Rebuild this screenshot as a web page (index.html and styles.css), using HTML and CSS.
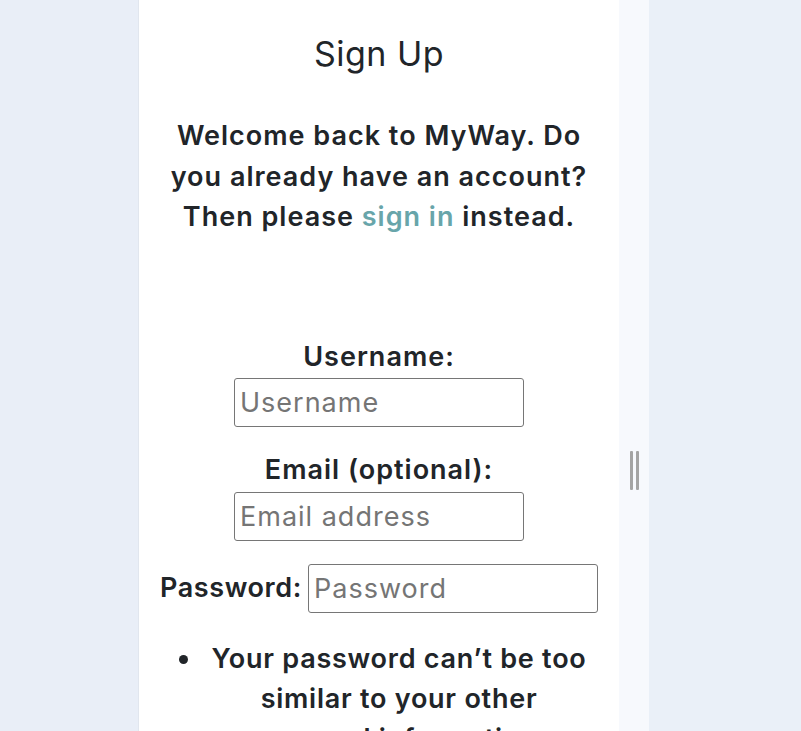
FILE: index.html
```html
<!DOCTYPE html>
<html lang="en">
<head>
<meta charset="utf-8">
<title>Sign Up</title>
<link rel="stylesheet" href="styles.css">
</head>
<body>
<div class="page">
  <aside class="gutter"></aside>
  <main class="panel">
    <h1 class="title">Sign Up</h1>
    <p class="intro">Welcome back to MyWay. Do you already have an account? Then please <a class="link" href="#">sign in</a> instead.</p>
    <form class="form">
      <div class="field">
        <label class="label" for="username">Username:</label>
        <input class="input" id="username" type="text" placeholder="Username">
      </div>
      <div class="field">
        <label class="label" for="email">Email (optional):</label>
        <input class="input" id="email" type="email" placeholder="Email address">
      </div>
      <div class="field field-inline">
        <label class="label label-inline" for="password">Password:</label>
        <input class="input" id="password" type="password" placeholder="Password">
      </div>
      <ul class="rules">
        <li>Your password can’t be too similar to your other personal information.</li>
        <li>Your password must contain at least 8 characters.</li>
      </ul>
    </form>
  </main>
  <div class="splitter"><span class="grip"></span><span class="grip"></span></div>
  <div class="rest"></div>
</div>
</body>
</html>
```
FILE: styles.css
```css
html, body {
  margin: 0;
  padding: 0;
  height: 100%;
  overflow: hidden;
}
body {
  background: #eaeff7;
  font-family: Inter, "Noto Sans", sans-serif;
  color: #212529;
}
.page {
  display: flex;
  height: 100%;
}
.gutter {
  width: 138px;
  flex: none;
  background: #e9eef7;
  border-right: 1px solid #e1e6ee;
}
.panel {
  width: 432px;
  flex: none;
  background: #ffffff;
  padding: 0 24px;
  text-align: center;
}
.title {
  margin: 28px 0 0;
  font-size: 34px;
  font-weight: 400;
  line-height: 51px;
  letter-spacing: 0.5px;
}
.intro {
  margin: 37px 0 0;
  font-size: 27px;
  font-weight: 600;
  line-height: 40.5px;
  letter-spacing: 1px;
}
.link {
  color: #68a5aa;
  text-decoration: none;
}
.form {
  margin-top: 99px;
  display: flex;
  flex-direction: column;
  align-items: center;
}
.field {
  display: flex;
  flex-direction: column;
  align-items: center;
  gap: 1px;
  margin-bottom: 23px;
}
.field-inline {
  flex-direction: row;
  gap: 6px;
  margin-bottom: 24px;
}
.label {
  font-size: 27px;
  font-weight: 600;
  line-height: 40.5px;
  letter-spacing: 1px;
}
.label-inline {
  letter-spacing: 0.6px;
}
.input {
  box-sizing: border-box;
  width: 290px;
  height: 49px;
  margin: 0;
  padding: 0 5px;
  border: 1px solid #767676;
  border-radius: 3px;
  font-family: inherit;
  font-size: 27px;
  letter-spacing: 1px;
  color: #212529;
  background: #fff;
}
.input::placeholder {
  color: #757575;
}
.rules {
  margin: 0;
  padding: 2px 0 0 40px;
  font-size: 27px;
  font-weight: 600;
  line-height: 40px;
  letter-spacing: 0.75px;
}
.splitter {
  width: 30px;
  flex: none;
  background: #f7f9fd;
  display: flex;
  justify-content: center;
  align-items: flex-start;
  gap: 3px;
  padding: 451px 0 0 1px;
  box-sizing: border-box;
}
.grip {
  width: 3px;
  height: 39px;
  border-radius: 1px;
  background: #a4a4a4;
}
.rest {
  flex: 1;
  background: #eaf0f8;
}
```
